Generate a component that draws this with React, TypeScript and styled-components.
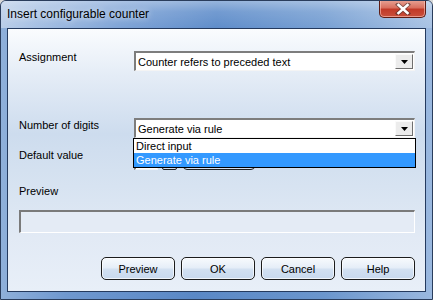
import React from "react";
import styled, { createGlobalStyle } from "styled-components";

const Global = createGlobalStyle`
  html, body { margin: 0; padding: 0; background: #d8d8d8; }
  body { font-family: "Liberation Sans", Arial, sans-serif; }
  * { box-sizing: border-box; }
`;

const Window = styled.div`
  width: 433px;
  height: 300px;
  display: flex;
  flex-direction: column;
  border: 1px solid #2a3d5c;
  border-radius: 6px 6px 0 0;
  background: linear-gradient(90deg, #8fb0da 0%, #6f98cf 15%, #5a88c6 45%, #6b96cd 75%, #9ab8df 100%);
  overflow: hidden;
`;

const TitleBar = styled.div`
  height: 27px;
  display: flex;
  align-items: flex-start;
  justify-content: space-between;
  padding-left: 6px;
  padding-right: 6px;
  background: linear-gradient(180deg, rgba(255,255,255,0.35) 0%, rgba(255,255,255,0.12) 40%, rgba(255,255,255,0) 100%),
    linear-gradient(90deg, #b9cde8 0%, #a6c0e3 8%, #7ea3d6 28%, #5f8dca 50%, #78a0d3 75%, #a9c3e4 100%);
`;

const Title = styled.div`
  margin-top: 6px;
  font-family: "Liberation Sans", Arial, sans-serif;
  font-size: 12px;
  color: #000;
  text-shadow: 0 0 6px rgba(255,255,255,0.9);
`;

const CloseButton = styled.div`
  width: 47px;
  height: 18px;
  margin-top: -1px;
  border: 1px solid #5e1c14;
  border-top: none;
  border-radius: 0 0 5px 5px;
  background: linear-gradient(180deg, #e8a496 0%, #d9705f 45%, #c23a28 55%, #c9503c 100%);
  box-shadow: inset 0 0 0 1px rgba(255, 200, 190, 0.6);
  display: flex;
  align-items: center;
  justify-content: center;
`;

const Client = styled.div`
  flex: 1;
  margin: 0 6px 7px 6px;
  border: 1px solid #243a5e;
  background: linear-gradient(180deg, #fafcfe 0%, #e4ecf6 18%, #cddcee 40%, #d7e3f1 60%, #e2eaf5 80%, #e8eff8 100%);
  display: flex;
  flex-direction: column;
  padding: 22px 9px 0 11px;
  font-family: "Liberation Sans", Arial, sans-serif;
  font-size: 11px;
  color: #000;
`;

const FieldRow = styled.div<{ $gap: number }>`
  display: flex;
  align-items: flex-start;
  margin-top: ${(p) => p.$gap}px;
`;

const Label = styled.div<{ $shift?: number }>`
  width: 115px;
  line-height: 14px;
  margin-top: ${(p) => p.$shift ?? 0}px;
  white-space: nowrap;
`;

const BlockLabel = styled.div<{ $gap: number }>`
  line-height: 14px;
  margin-top: ${(p) => p.$gap}px;
`;

const ComboWrap = styled.div`
  position: relative;
  width: 281px;
`;

const Combo = styled.div`
  height: 20px;
  display: flex;
  align-items: center;
  justify-content: space-between;
  background: #fff;
  border-style: solid;
  border-width: 2px 1px 1px 2px;
  border-color: #7d7d7d #f4f4f4 #f4f4f4 #7d7d7d;
  padding-left: 2px;
  padding-right: 1px;
  white-space: nowrap;
`;

const ComboArrow = styled.div`
  width: 18px;
  height: 15px;
  background: #ececec;
  border-style: solid;
  border-width: 1px;
  border-color: #fafafa #6f6f6f #6f6f6f #fafafa;
  display: flex;
  align-items: center;
  justify-content: center;
`;

const DropList = styled.div`
  position: absolute;
  left: -1px;
  right: -1px;
  top: 20px;
  background: #fff;
  border: 1px solid #000;
  z-index: 2;
`;

const DropItem = styled.div<{ $active?: boolean }>`
  height: 14px;
  line-height: 14px;
  padding-left: 2px;
  background: ${(p) => (p.$active ? "#3399ff" : "#fff")};
  color: ${(p) => (p.$active ? "#fff" : "#000")};
`;

const Controls = styled.div`
  display: flex;
  align-items: center;
  gap: 4px;
  height: 21px;
`;

const SmallInput = styled.div`
  width: 24px;
  height: 20px;
  background: #fff;
  border-style: solid;
  border-width: 2px 1px 1px 2px;
  border-color: #7d7d7d #f4f4f4 #f4f4f4 #7d7d7d;
`;

const Spin = styled.div`
  width: 15px;
  height: 20px;
  border: 1px solid #222;
  border-radius: 2px;
  background: linear-gradient(180deg, #f5f8fc, #cfddef);
`;

const RoundBtn = styled.div`
  margin-left: 2px;
  width: 72px;
  height: 20px;
  border: 1px solid #222;
  border-radius: 4px;
  background: linear-gradient(180deg, #f5f8fc, #cfddef);
`;

const PreviewBox = styled.div`
  margin-top: 12px;
  width: 396px;
  height: 23px;
  border-style: solid;
  border-width: 2px 1px 1px 2px;
  border-color: #7a7a7a #ffffff #ffffff #7a7a7a;
  background: #e4ebf5;
`;

const ButtonBar = styled.div`
  display: flex;
  justify-content: flex-end;
  gap: 6px;
  margin-top: 24px;
  padding-right: 1px;
`;

const Button = styled.div`
  width: 74px;
  height: 23px;
  border: 1px solid #1c1c1c;
  border-radius: 5px;
  background: linear-gradient(180deg, #f7fafd 0%, #e6eef8 45%, #d2e0f1 55%, #c8d9ee 100%);
  box-shadow: inset 0 0 0 1px rgba(255,255,255,0.7);
  display: flex;
  align-items: center;
  justify-content: center;
  font-size: 11px;
`;

const Arrow = () => (
  <svg width="7" height="4" viewBox="0 0 7 4">
    <path d="M0 0H7L3.5 4Z" fill="#000" />
  </svg>
);

export default function App() {
  return (
    <>
      <Global />
      <Window>
        <TitleBar>
          <Title>Insert configurable counter</Title>
          <CloseButton>
            <svg width="16" height="12" viewBox="0 0 16 12">
              <path d="M3 1.5L13 10.5M13 1.5L3 10.5" stroke="#3a2a28" strokeWidth="4.2" strokeLinecap="square" opacity="0.55" />
              <path d="M3.5 2L12.5 10M12.5 2L3.5 10" stroke="#fff" strokeWidth="2.6" strokeLinecap="square" />
            </svg>
          </CloseButton>
        </TitleBar>
        <Client>
          <FieldRow $gap={0}>
            <Label $shift={-1}>Assignment</Label>
            <ComboWrap>
              <Combo>
                <span>Counter refers to preceded text</span>
                <ComboArrow><Arrow /></ComboArrow>
              </Combo>
            </ComboWrap>
          </FieldRow>
          <FieldRow $gap={47}>
            <Label $shift={0}>Number of digits</Label>
            <ComboWrap>
              <Combo>
                <span>Generate via rule</span>
                <ComboArrow><Arrow /></ComboArrow>
              </Combo>
              <DropList>
                <DropItem>Direct input</DropItem>
                <DropItem $active>Generate via rule</DropItem>
              </DropList>
            </ComboWrap>
          </FieldRow>
          <FieldRow $gap={11}>
            <Label $shift={-1}>Default value</Label>
            <Controls>
              <SmallInput />
              <Spin />
              <RoundBtn />
            </Controls>
          </FieldRow>
          <BlockLabel $gap={14}>Preview</BlockLabel>
          <PreviewBox />
          <ButtonBar>
            <Button>Preview</Button>
            <Button>OK</Button>
            <Button>Cancel</Button>
            <Button>Help</Button>
          </ButtonBar>
        </Client>
      </Window>
    </>
  );
}
